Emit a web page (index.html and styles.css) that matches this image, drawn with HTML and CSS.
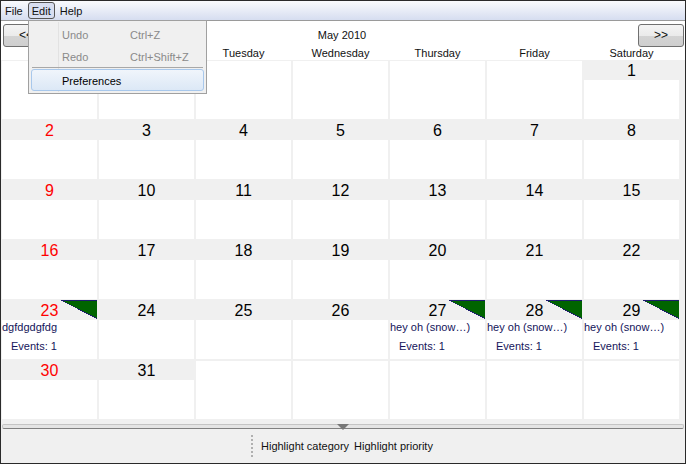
FILE: index.html
```html
<!DOCTYPE html>
<html lang="en">
<head>
    <meta charset="UTF-8">
    <meta name="viewport" content="width=device-width, initial-scale=1.0">
    <title>Calendar</title>
    <link rel="stylesheet" href="styles.css">
</head>
<body>
<div class="window">
    <div class="menubar">
        <span class="menu-item">File</span>
        <span class="menu-item menu-open">Edit</span>
        <span class="menu-item">Help</span>
    </div>

    <div class="dropdown">
        <div class="drop-row drop-disabled"><span class="drop-label">Undo</span><span>Ctrl+Z</span></div>
        <div class="drop-row drop-disabled"><span class="drop-label">Redo</span><span>Ctrl+Shift+Z</span></div>
        <div class="drop-sep"></div>
        <div class="drop-row drop-active"><span class="drop-label">Preferences</span></div>
    </div>

    <div class="nav">
        <button class="nav-btn" type="button">&lt;&lt;</button>
        <span class="month">May 2010</span>
        <button class="nav-btn" type="button">&gt;&gt;</button>
    </div>

    <!-- first two columns sit under the open menu -->
    <div class="weekdays">
        <span></span><span></span><span>Tuesday</span><span>Wednesday</span><span>Thursday</span><span>Friday</span><span>Saturday</span>
    </div>

    <div class="month-grid" id="monthGrid"></div>

    <div class="splitter"><span class="splitter-arrow"></span></div>

    <div class="toolbar">
        <span class="grip"></span>
        <span class="tool-btn">Highlight category</span>
        <span class="tool-btn">Highlight priority</span>
    </div>
</div>

<script>
    // May 2010 starts on a Saturday, so six blank cells first
    const events = {
        23: "dgfdgdgfdg",
        27: "hey oh (snow\u2026)",
        28: "hey oh (snow\u2026)",
        29: "hey oh (snow\u2026)"
    };

    const grid = document.getElementById("monthGrid");
    let html = "";

    for (let i = 0; i < 6; i++) {
        html += '<div class="cell"></div>';
    }

    for (let day = 1; day <= 31; day++) {
        const sunday = day % 7 === 2;
        html += '<div class="cell">';
        html += `<div class="day-head${sunday ? " sunday" : ""}">${day}`;
        if (events[day]) {
            html += '<svg class="flag" width="37" height="19" viewBox="0 0 37 19" shape-rendering="crispEdges"><polygon points="0,0 37,0 37,19" fill="#1c1c6c"/><polygon points="3,1 37,1 37,18.2" fill="#006400"/></svg>';
        }
        html += "</div>";
        if (events[day]) {
            html += `<div class="event-name">${events[day]}</div><div class="event-count">Events: 1</div>`;
        }
        html += "</div>";
    }

    for (let i = 0; i < 5; i++) {
        html += '<div class="cell"></div>';
    }

    grid.innerHTML = html;
</script>
</body>
</html>
```

FILE: styles.css
```css
html, body {
    margin: 0;
    height: 100%;
}
body {
    font-family: "Liberation Sans", Arial, sans-serif;
    font-size: 11px;
    color: #111;
    overflow: hidden;
}
.window {
    position: relative;
    box-sizing: border-box;
    height: 464px;
    display: flex;
    flex-direction: column;
    border: 1px solid #2a2a2a;
    background-color: #f0f0f0;
}
.menubar {
    height: 19px;
    flex: none;
    display: flex;
    align-items: center;
    background: linear-gradient(#fafbfd, #d6ddf0);
    border-bottom: 1px solid #9a9a9a;
}
.menu-item {
    padding: 0 3px;
    height: 17px;
    line-height: 16px;
    margin-right: 1px;
    box-sizing: border-box;
    border: 1px solid transparent;
}
.menu-open {
    border-color: #555;
    border-radius: 3px;
    background-color: #d8def0;
}
.dropdown {
    position: absolute;
    left: 27px;
    top: 19px;
    width: 179px;
    height: 74px;
    box-sizing: border-box;
    padding: 3px 2px 2px;
    background-color: #f0f0f0;
    border: 1px solid #a0a0a0;
    z-index: 5;
}
.dropdown::before {
    content: "";
    position: absolute;
    left: 29px;
    top: 1px;
    bottom: 1px;
    width: 1px;
    background-color: #e2e2e2;
}
.drop-row {
    position: relative;
    display: flex;
    height: 22px;
    line-height: 22px;
}
.drop-label {
    margin-left: 31px;
    width: 68px;
}
.drop-disabled {
    color: #8a8a8a;
}
.drop-sep {
    position: relative;
    height: 1px;
    margin: -1px 1px 1px 1px;
    background-color: #a8a8a8;
}
.drop-active {
    box-sizing: border-box;
    border: 1px solid #a8c8ec;
    border-radius: 3px;
    background: linear-gradient(#f0f5fb, #dce8f6);
    line-height: 22px;
    color: #000;
}
.drop-active .drop-label {
    margin-left: 30px;
}
.nav {
    height: 26px;
    box-sizing: border-box;
    flex: none;
    padding: 2px 1px 0 2px;
    display: flex;
    justify-content: space-between;
    align-items: center;
    background-color: #fff;
}
.nav-btn {
    width: 46px;
    height: 23px;
    padding: 0;
    font-family: inherit;
    font-size: 12px;
    color: #111;
    border: 1px solid #707070;
    border-radius: 3px;
    background: linear-gradient(#f4f4f4 0%, #ebebeb 50%, #d4d4d4 51%, #cfcfcf 100%);
}
.month {
    margin-right: 3px;
    color: #111;
}
.weekdays {
    height: 13px;
    flex: none;
    padding-left: 1px;
    display: grid;
    grid-template-columns: repeat(7, 95px);
    column-gap: 2px;
    text-align: center;
    line-height: 12px;
    background-color: #fff;
}
.month-grid {
    flex: none;
    padding: 1px 0 5px 1px;
    display: grid;
    grid-template-columns: repeat(7, 95px);
    grid-auto-rows: 58px;
    gap: 2px;
}
.cell {
    background-color: #fff;
}
.day-head {
    position: relative;
    height: 19px;
    background-color: #f0f0f0;
    text-align: center;
    font-size: 16px;
    line-height: 20px;
    color: #000;
}
.sunday {
    color: #ff0000;
}
.flag {
    position: absolute;
    right: 0;
    top: -1px;
}
.event-name {
    height: 14px;
    line-height: 14px;
    color: #14145a;
    white-space: nowrap;
}
.event-count {
    margin-top: 5px;
    padding-left: 9px;
    line-height: 14px;
    color: #14145a;
}
.splitter {
    flex: none;
    position: relative;
    height: 3px;
    margin: 0 1px;
    border: 1px solid #c4c4c4;
    border-bottom: 1px solid #808080;
    border-radius: 2px;
    background-color: #e4e4e4;
}
.splitter-arrow {
    position: absolute;
    left: 334px;
    top: -1px;
    width: 0;
    height: 0;
    border-left: 6px solid transparent;
    border-right: 6px solid transparent;
    border-top: 6px solid #777;
}
.toolbar {
    flex: 1;
    display: flex;
    align-items: center;
    padding-left: 250px;
}
.grip {
    width: 2px;
    height: 22px;
    margin-right: 6px;
    border-left: 2px dotted #b0b0b0;
}
.tool-btn {
    margin-right: 5px;
    color: #111;
}
```
